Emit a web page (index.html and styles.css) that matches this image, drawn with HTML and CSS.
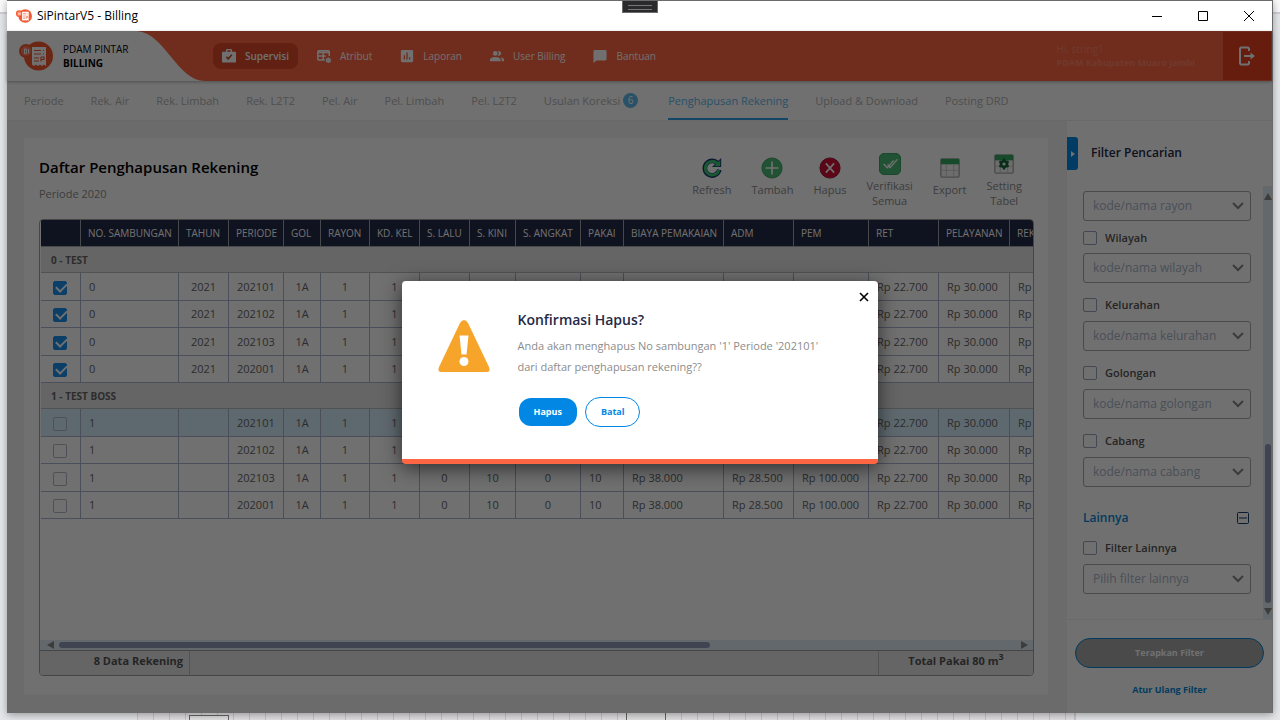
FILE: index.html
```html
<!DOCTYPE html>
<html lang="id">
<head>
<meta charset="utf-8">
<title>SiPintarV5 - Billing</title>
<link rel="stylesheet" href="styles.css">
</head>
<body>
<svg class="defs" width="0" height="0" aria-hidden="true">
  <symbol id="logo" viewBox="0 0 34 30">
    <circle cx="19.500" cy="15" r="14.500" fill="#f4592f"/><circle cx="7" cy="10" r="7" fill="#f4592f"/>
    <circle cx="7" cy="10" r="5" fill="#ff7d5a"/>
    <path d="M5.500 8v4.500h1.800V8zM9.500 8v4.500" stroke="#fff" fill="none"/>
    <path d="M13 6h14v19l-2-1.500-2 1.500-2-1.500-2 1.500-2-1.500-2 1.500-2-1.500z" fill="#fff"/>
    <path d="M15 9.500h7M24 9.500h1M15 13h7M24 13h1M15 17h5M15 20h5M22 16v4.500M22 16h3v2.500h-3" stroke="#f4592f" stroke-width="1.200" fill="none"/>
  </symbol>
</svg>
<div class="backdrop-grid" aria-hidden="true"><i class="node node-a"></i><i class="node node-b"></i></div>
<div class="window">
  <div class="handle"></div>
  <header class="titlebar">
    <svg class="app-icon"><use href="#logo"/></svg>
    <span class="app-name">SiPintarV5 - Billing</span>
    <div class="win-buttons">
      <button aria-label="Minimize"><svg width="12" height="12"><path d="M1 6.500h10" stroke="#000"/></svg></button>
      <button aria-label="Maximize"><svg width="12" height="12"><path d="M1.500 1.500h9v9h-9z" stroke="#000" fill="none"/></svg></button>
      <button aria-label="Close"><svg width="12" height="12"><path d="M1 1l10 10M11 1L1 11" stroke="#000"/></svg></button>
    </div>
  </header>

  <div class="content">
    <div class="header">
      <div class="brand">
        <svg class="brand-logo"><use href="#logo"/></svg>
        <div class="brand-text"><span>PDAM PINTAR</span><b>BILLING</b></div>
      </div>
      <svg class="curve" viewBox="0 0 68 50" preserveAspectRatio="none"><path d="M0 0C28 2 40 50 68 50H0z" fill="#fff"/></svg>
      <nav class="nav">
        <button class="nav-item active"><svg viewBox="0 0 16 16"><path fill="#fff" fill-rule="evenodd" d="M4.500 3V1.500A1.500 1.500 0 0 1 6 0h4a1.500 1.500 0 0 1 1.500 1.500V3H15a1 1 0 0 1 1 1v10.500a1 1 0 0 1-1 1H1a1 1 0 0 1-1-1V4a1 1 0 0 1 1-1zm1.600 0h3.800V1.500H6.100z"/><path d="M5 9l2.200 2.200 4-4.500" stroke="#c8401f" stroke-width="1.700" fill="none"/></svg>Supervisi</button>
        <button class="nav-item"><svg viewBox="0 0 16 16"><path d="M9 12.500H2a1 1 0 0 1-1-1V3a1 1 0 0 1 1-1h11a1 1 0 0 1 1 1v5M1 4h13M1 8h9M7 4v8" stroke="#fff" stroke-width="1.700" fill="none"/><circle cx="13" cy="13" r="2" stroke="#fff" stroke-width="1.700" fill="none"/><path d="M13 9.500v7M10 11.200l6 3.600M16 11.200l-6 3.600" stroke="#fff" stroke-width=".8"/></svg>Atribut</button>
        <button class="nav-item"><svg viewBox="0 0 16 16"><rect x="1" y="1" width="14" height="14" rx="1.500" fill="#fff"/><path d="M5 7v5M8 4v8M11 9.500V12" stroke="#ff6643" stroke-width="1.600"/></svg>Laporan</button>
        <button class="nav-item"><svg viewBox="0 0 16 16"><circle cx="6" cy="5" r="2.700" fill="#fff"/><path d="M0 14v-2c0-2 3.500-3 6-3s6 1 6 3v2zM9 2.500a2.700 2.700 0 1 1 0 5c1.300-1.500 1.300-3.500 0-5zM12 9.300c2 .3 4 1.200 4 2.700v2h-2.700v-2c0-1.200-.4-2-1.300-2.700z" fill="#fff"/></svg>User Billing</button>
        <button class="nav-item"><svg viewBox="0 0 16 16"><path d="M2 1h12a1.500 1.500 0 0 1 1.500 1.500v9A1.500 1.500 0 0 1 14 13H4l-3.500 3V2.500A1.500 1.500 0 0 1 2 1z" fill="#fff"/></svg>Bantuan</button>
      </nav>
      <div class="user"><span>Hi, string1</span><b>PDAM Kabupaten Muaro Jambi</b></div>
      <button class="logout" aria-label="Keluar"><svg width="18" height="20" viewBox="0 0 18 20"><path d="M11 5V2.500L10 1.500H3L2 2.500v15l1 1h7l1-1V15M6 10h9" stroke="#fff" stroke-width="2" fill="none"/><path d="M12.500 6.500L17 10l-4.500 3.500z" fill="#fff"/></svg></button>
    </div>

    <nav class="tabs">
      <a href="#">Periode</a><a href="#">Rek. Air</a><a href="#">Rek. Limbah</a><a href="#">Rek. L2T2</a><a href="#">Pel. Air</a><a href="#">Pel. Limbah</a><a href="#">Pel. L2T2</a><a href="#" class="with-badge">Usulan Koreksi<span class="badge">6</span></a><a href="#" class="current">Penghapusan Rekening</a><a href="#">Upload &amp; Download</a><a href="#">Posting DRD</a>
    </nav>

    <div class="body">
      <main class="main">
        <section class="card">
          <div class="card-head">
            <div class="heading"><h1>Daftar Penghapusan Rekening</h1><p>Periode 2020</p></div>
            <div class="toolbar">
              <button><svg viewBox="0 0 24 24"><path d="M19.500 9A8 8 0 1 0 20 14" stroke="#1b3c70" stroke-width="5" fill="none"/><path d="M22 1v10H12z" fill="#1b3c70"/><path d="M19 9A7.500 7.500 0 1 0 19.500 14" stroke="#3fc878" stroke-width="3" fill="none"/><path d="M21 3.500v6.500H14z" fill="#3fc878"/></svg>Refresh</button>
              <button><svg viewBox="0 0 24 24"><circle cx="12" cy="12" r="11" fill="#4cbb78" stroke="#3a9e62"/><path d="M12 5v14M5 12h14" stroke="#fff" stroke-width="1.800"/></svg>Tambah</button>
              <button><svg viewBox="0 0 24 24"><circle cx="12" cy="12" r="11" fill="#d01038" stroke="#9c1030"/><path d="M7.500 7l9 10M16.500 7l-9 10" stroke="#fff" stroke-width="1.800"/></svg>Hapus</button>
              <button class="tall"><svg viewBox="0 0 24 24"><rect x=".5" y=".5" width="23" height="23" rx="5" fill="#4cbb78" stroke="#2c9a5c"/><path d="M5 12l4 4 7-8M9.500 12.500L12 16l8-9" stroke="#fff" stroke-width="1.500" fill="none"/></svg>Verifikasi<br>Semua</button>
              <button><svg viewBox="0 0 24 24"><rect x="2" y="2" width="20" height="20" rx="1.500" fill="#f8f8f8" stroke="#aaa" stroke-width="1.500"/><path d="M2 2h20v6H2z" fill="#35a863"/><path d="M2 14.500h20M8 8v14M16 8v14" stroke="#ccc"/></svg>Export</button>
              <button class="tall"><svg viewBox="0 0 24 24"><rect x="2" y="2" width="20" height="20" rx="1.500" fill="#f8f8f8" stroke="#aaa" stroke-width="1.500"/><path d="M2 2h20v6H2z" fill="#35a863"/><path d="M2 14.500h20M8 8v14M16 8v14" stroke="#ccc"/><circle cx="12" cy="12" r="3.200" fill="none" stroke="#17693d" stroke-width="3"/><path d="M12 6v3M12 15v3M7 9l2 1.500M15 13.500l2 1.500M7 15l2-1.500M15 10.500L17 9" stroke="#17693d" stroke-width="2.500"/></svg>Setting<br>Tabel</button>
            </div>
          </div>

          <div class="grid-box">
            <div class="grid-scroll">
              <table>
                <colgroup><col class="w-check"><col class="w-no"><col class="w-thn"><col class="w-per"><col class="w-gol"><col class="w-ray"><col class="w-thn"><col class="w-thn"><col class="w-kini"><col class="w-ang"><col class="w-pakai"><col class="w-biaya"><col class="w-rp"><col class="w-pem"><col class="w-rp"><col class="w-pel"><col class="w-biaya"></colgroup>
                <thead><tr><th></th><th>NO. SAMBUNGAN</th><th>TAHUN</th><th>PERIODE</th><th>GOL</th><th>RAYON</th><th>KD. KEL</th><th>S. LALU</th><th>S. KINI</th><th>S. ANGKAT</th><th>PAKAI</th><th>BIAYA PEMAKAIAN</th><th>ADM</th><th>PEM</th><th>RET</th><th>PELAYANAN</th><th>REK. AIR</th></tr></thead>
                <tbody>
                  <tr class="group"><td colspan="17">0 - TEST</td></tr>
                  <tr><td><input type="checkbox" aria-label="Pilih 202101" checked></td><td>0</td><td>2021</td><td>202101</td><td>1A</td><td>1</td><td>1</td><td>0</td><td>10</td><td>0</td><td>10</td><td>Rp 38.000</td><td>Rp 28.500</td><td>Rp 100.000</td><td>Rp 22.700</td><td>Rp 30.000</td><td>Rp 219.200</td></tr>
                  <tr><td><input type="checkbox" aria-label="Pilih 202102" checked></td><td>0</td><td>2021</td><td>202102</td><td>1A</td><td>1</td><td>1</td><td>0</td><td>10</td><td>0</td><td>10</td><td>Rp 38.000</td><td>Rp 28.500</td><td>Rp 100.000</td><td>Rp 22.700</td><td>Rp 30.000</td><td>Rp 219.200</td></tr>
                  <tr><td><input type="checkbox" aria-label="Pilih 202103" checked></td><td>0</td><td>2021</td><td>202103</td><td>1A</td><td>1</td><td>1</td><td>0</td><td>10</td><td>0</td><td>10</td><td>Rp 38.000</td><td>Rp 28.500</td><td>Rp 100.000</td><td>Rp 22.700</td><td>Rp 30.000</td><td>Rp 219.200</td></tr>
                  <tr><td><input type="checkbox" aria-label="Pilih 202001" checked></td><td>0</td><td>2021</td><td>202001</td><td>1A</td><td>1</td><td>1</td><td>0</td><td>10</td><td>0</td><td>10</td><td>Rp 38.000</td><td>Rp 28.500</td><td>Rp 100.000</td><td>Rp 22.700</td><td>Rp 30.000</td><td>Rp 219.200</td></tr>
                </tbody>
                <tbody>
                  <tr class="group"><td colspan="17">1 - TEST BOSS</td></tr>
                  <tr class="selected"><td><input type="checkbox" aria-label="Pilih 202101"></td><td>1</td><td></td><td>202101</td><td>1A</td><td>1</td><td>1</td><td>0</td><td>10</td><td>0</td><td>10</td><td>Rp 38.000</td><td>Rp 28.500</td><td>Rp 100.000</td><td>Rp 22.700</td><td>Rp 30.000</td><td>Rp 219.200</td></tr>
                  <tr><td><input type="checkbox" aria-label="Pilih 202102"></td><td>1</td><td></td><td>202102</td><td>1A</td><td>1</td><td>1</td><td>0</td><td>10</td><td>0</td><td>10</td><td>Rp 38.000</td><td>Rp 28.500</td><td>Rp 100.000</td><td>Rp 22.700</td><td>Rp 30.000</td><td>Rp 219.200</td></tr>
                  <tr><td><input type="checkbox" aria-label="Pilih 202103"></td><td>1</td><td></td><td>202103</td><td>1A</td><td>1</td><td>1</td><td>0</td><td>10</td><td>0</td><td>10</td><td>Rp 38.000</td><td>Rp 28.500</td><td>Rp 100.000</td><td>Rp 22.700</td><td>Rp 30.000</td><td>Rp 219.200</td></tr>
                  <tr><td><input type="checkbox" aria-label="Pilih 202001"></td><td>1</td><td></td><td>202001</td><td>1A</td><td>1</td><td>1</td><td>0</td><td>10</td><td>0</td><td>10</td><td>Rp 38.000</td><td>Rp 28.500</td><td>Rp 100.000</td><td>Rp 22.700</td><td>Rp 30.000</td><td>Rp 219.200</td></tr>
                </tbody>
              </table>
            </div>
            <div class="hscroll"><i class="arrow left"></i><span class="track"><i class="thumb"></i></span><i class="arrow right"></i></div>
            <div class="summary"><b class="count">8 Data Rekening</b><b class="total">Total Pakai 80 m<sup>3</sup></b></div>
          </div>
        </section>
      </main>

      <aside class="filter">
        <div class="filter-head"><button class="collapse" aria-label="Tutup filter"><i></i></button><h2>Filter Pencarian</h2></div>
        <div class="filter-scroll">
          <div class="fields">
            <select aria-label="Rayon"><option>kode/nama rayon</option></select>
            <label class="check first"><input type="checkbox">Wilayah</label>
            <select aria-label="Wilayah"><option>kode/nama wilayah</option></select>
            <label class="check"><input type="checkbox">Kelurahan</label>
            <select aria-label="Kelurahan"><option>kode/nama kelurahan</option></select>
            <label class="check"><input type="checkbox">Golongan</label>
            <select aria-label="Golongan"><option>kode/nama golongan</option></select>
            <label class="check"><input type="checkbox">Cabang</label>
            <select aria-label="Cabang"><option>kode/nama cabang</option></select>
            <div class="section"><span>Lainnya</span><button aria-label="Ciutkan"><svg width="12" height="12"><rect x=".5" y=".5" width="11" height="11" rx="1" fill="none" stroke="#173a6b"/><path d="M2 6h8" stroke="#173a6b"/></svg></button></div>
            <label class="check"><input type="checkbox">Filter Lainnya</label>
            <select aria-label="Filter Lainnya"><option>Pilih filter lainnya</option></select>
          </div>
          <div class="vscroll"><i class="arrow up"></i><span class="track"><i class="thumb"></i></span><i class="arrow down"></i></div>
        </div>
        <div class="filter-foot"><button class="apply">Terapkan Filter</button><a href="#">Atur Ulang Filter</a></div>
      </aside>
    </div>

    <div class="overlay">
      <div class="dialog" role="dialog" aria-labelledby="dlg-title">
        <button class="close" aria-label="Tutup"><svg width="10" height="10"><path d="M1 1l8 8M9 1L1 9" stroke="#000" stroke-width="1.600"/></svg></button>
        <svg class="warn" viewBox="0 0 52 52"><path d="M22 3q4-6 8 0l21 44q2 5-3 5H4q-5 0-3-5z" fill="#f7a52a"/><path d="M21.500 15.500h9l-2 19h-5z" fill="#fff"/><circle cx="26" cy="41.500" r="4.500" fill="#fff"/></svg>
        <div class="dialog-body">
          <h2 id="dlg-title">Konfirmasi Hapus?</h2>
          <p>Anda akan menghapus No sambungan '1' Periode '202101' dari daftar penghapusan rekening??</p>
          <div class="actions"><button class="primary">Hapus</button><button class="secondary">Batal</button></div>
        </div>
      </div>
    </div>
  </div>
</div>
</body>
</html>
```

FILE: styles.css
```css
* { box-sizing: border-box; }
body {
  margin: 0; height: 100vh; padding: 0 7px 7px; overflow: hidden; position: relative;
  background: linear-gradient(#fafafa 12px, #cfd0d4 12px, #cfd0d4 14px, #e6e7ea 14px);
  font-family: "Open Sans", "Noto Sans", sans-serif; font-size: 12px; line-height: 16px; color: #000;
}
button { font: inherit; color: inherit; background: none; border: 0; padding: 0; margin: 0; }
a { color: inherit; text-decoration: none; }
h1, h2, p { margin: 0; }
.defs { position: absolute; }

.backdrop-grid {
  position: absolute; left: 137px; right: 204px; bottom: 0; height: 8px;
  border-right: 2px solid #c8c8c8; border-left: 1px solid #c8c8c8;
  background: repeating-linear-gradient(90deg, #e4e2e4 0 15px, #c8c6c8 15px 16px);
}
.node { position: absolute; bottom: 0; width: 40px; height: 5px; background: #e2e2e2; border: 1px solid #666; border-bottom: 0; }
.node-a { left: 51px; }
.node-b { left: 488px; height: 8px; border-top: 0; }

.window {
  position: relative; height: 100%; display: flex; flex-direction: column;
  border-top: 1px solid #6b6b6b; border-right: 1px solid #6b6b6b;
  box-shadow: 0 2px 8px rgba(0,0,0,.35); background: #fff;
}
.handle {
  position: absolute; top: 0; left: 50%; width: 36px; height: 12px; margin-left: -18px;
  background: #2a2a2c; border: 1px solid #6b6b6b; border-top: 0;
}
.handle::after { content: ""; position: absolute; left: 5px; right: 5px; top: 4px; height: 3px; border: solid #777; border-width: 1px 0; }
.titlebar { height: 30px; flex: none; display: flex; align-items: center; padding-left: 9px; gap: 5px; }
.app-icon { width: 16px; height: 16px; }
.win-buttons { margin-left: auto; display: flex; }
.win-buttons button { width: 46px; height: 30px; display: grid; place-items: center; }

.content { position: relative; flex: 1; min-height: 0; display: flex; flex-direction: column; }
.header { height: 50px; flex: none; display: flex; align-items: center; background: #ff6643; color: #fff; box-shadow: 0 1px 3px rgba(0,0,0,.3); z-index: 1; }
.brand { width: 130px; height: 50px; flex: none; background: #fff; color: #000; display: flex; align-items: center; gap: 10px; padding-left: 12px; }
.brand-logo { width: 34px; height: 30px; flex: none; }
.brand-text, .user { display: flex; flex-direction: column; font-size: 10px; line-height: 14px; white-space: nowrap; }
.curve { width: 68px; height: 50px; flex: none; }
.nav { display: flex; gap: 10px; padding-left: 8px; }
.nav-item { height: 26px; padding: 0 9px; display: flex; align-items: center; gap: 9px; border-radius: 8px; font-size: 10px; white-space: nowrap; }
.nav-item svg { width: 14px; height: 14px; }
.nav-item.active { background: #dc4a28; font-weight: 600; }
.user { margin-left: auto; padding-right: 28px; color: #ff8468; }
.user b { font-size: 9px; }
.logout { width: 48px; height: 48px; background: #e84220; display: grid; place-items: center; margin-right: 1px; }

.tabs { height: 40px; flex: none; display: flex; gap: 27px; padding: 0 17px; border-bottom: 1px solid #eee; color: #b4b4b4; font-size: 11px; }
.tabs a { height: 39px; line-height: 39px; white-space: nowrap; }
.tabs .current { color: #5fb8ea; border-bottom: 2px solid #2ba0e4; }
.with-badge { display: flex; align-items: center; gap: 3px; }
.badge { width: 15px; height: 15px; border-radius: 8px; background: #5fb8ea; color: #fff; font-size: 10px; line-height: 15px; text-align: center; margin-right: 3px; }

.body { flex: 1; min-height: 0; display: flex; }
.main { flex: 1; min-width: 0; background: #f4f4f4; padding: 17px 19px 18px 17px; }
.card { height: 100%; background: #fff; padding: 12px 14px 19px 15px; display: flex; flex-direction: column; }
.card-head { height: 69px; flex: none; display: flex; justify-content: space-between; }
h1 { font-size: 15px; line-height: 20px; font-weight: 600; }
.heading { padding-top: 7px; }
.heading p { margin-top: 9px; color: #8c8c8c; font-size: 11px; }
.toolbar { display: flex; align-items: flex-start; gap: 20px; padding: 2px 12px 0 0; }
.toolbar button { display: flex; flex-direction: column; align-items: center; gap: 2px; padding-top: 4px; color: #8c8c8c; font-size: 11px; line-height: 15px; }
.toolbar .tall { padding-top: 0; }
.toolbar svg { width: 24px; height: 24px; padding: 1px; }

.grid-box { flex: 1; min-height: 0; display: flex; flex-direction: column; border: 1px solid #a0a0a0; border-radius: 4px; overflow: hidden; }
.grid-scroll { flex: 1; min-height: 0; overflow: hidden; padding-left: 1px; }
table { table-layout: fixed; width: 1069px; border-spacing: 0; }
.w-check { width: 40px; } .w-no { width: 98px; } .w-thn { width: 50px; } .w-per { width: 55px; }
.w-gol { width: 37px; } .w-ray { width: 49px; } .w-kini { width: 46px; } .w-ang { width: 65px; }
.w-pakai { width: 43px; } .w-biaya { width: 100px; } .w-rp { width: 70px; } .w-pem { width: 75px; } .w-pel { width: 71px; }
th, td { padding: 0 0 0 8px; border-right: 1px solid #aab4d0; white-space: nowrap; text-align: left; }
th { height: 27px; padding-left: 7px; background: #242947; color: #fff; font-size: 10px; font-weight: 400; border-right-color: #a0a4ac; border-bottom: 1px solid #a0a4ac; }
td { height: 27px; border-bottom: 1px solid #aab4d0; color: #666; font-size: 11px; line-height: 16px; }
tbody tr:nth-child(even) td { height: 28px; }
tbody .group td { height: 26px; padding-left: 10px; background: #e7e7e7; border-bottom-color: #bbb; font-size: 10px; font-weight: 700; }
td:nth-child(3), td:nth-child(5), td:nth-child(6), td:nth-child(7), td:nth-child(8), td:nth-child(9), td:nth-child(10) { padding: 0; text-align: center; }
td:first-child:not([colspan]) { padding: 0 2px 0 0; text-align: center; }
.selected td { background: #d6eefc; }

input[type="checkbox"] { appearance: none; width: 14px; height: 14px; margin: 0; border: 1px solid #98a2c0; border-radius: 2px; position: relative; vertical-align: middle; flex: none; }
td input[type="checkbox"] { border-color: #b4b8c4; }
td input[type="checkbox"]:checked { background: #1c90ec; border-color: #1c90ec; }
td input[type="checkbox"]:checked::after { content: ""; position: absolute; left: 2px; top: 1px; width: 9px; height: 5px; border: solid #fff; border-width: 0 0 2px 2px; transform: rotate(-45deg); }

.hscroll { height: 10px; flex: none; display: flex; align-items: center; background: #dfecf5; padding: 0 5px 0 7px; gap: 5px; }
.track { flex: 1; display: flex; }
.thumb { background: #929cb6; border-radius: 3px; }
.hscroll .thumb { width: 68%; height: 6px; }
.arrow { border: 4px solid transparent; width: 0; height: 0; }
.arrow.left { border-right: 7px solid #888; border-left: 0; }
.arrow.right { border-left: 7px solid #888; border-right: 0; }
.summary { height: 25px; flex: none; display: flex; justify-content: space-between; background: #e7e7e7; border-top: 1px solid #a0a0a0; color: #555; font-size: 11px; line-height: 20px; }
.count { width: 150px; padding-right: 6px; text-align: right; border-right: 1px solid #bbb; }
.total { width: 155px; text-align: center; border-left: 1px solid #bbb; }
sup { font-size: 9px; line-height: 0; }

.filter { width: 205px; flex: none; background: #fff; display: flex; flex-direction: column; }
.filter-head { height: 65px; flex: none; display: flex; padding-top: 16px; gap: 13px; }
.collapse { width: 11px; height: 33px; background: #0288e4; border-radius: 0 3px 3px 0; display: grid; place-items: center; }
.collapse i { border: 3px solid transparent; border-left: 4px solid #fff; border-right: 0; }
h2 { font-size: 12px; line-height: 32px; font-weight: 600; color: #242947; }
.filter-scroll { flex: 1; min-height: 0; display: flex; border-bottom: 1px solid #eee; }
.fields { flex: 1; padding: 5px 12px 0 16px; display: flex; flex-direction: column; }
select { appearance: none; height: 30px; flex: none; width: 100%; padding: 0 9px; border: 1px solid #a8a8a8; border-radius: 3px; color: #aab4c8; font: inherit; font-size: 12px;
  background: url("data:image/svg+xml,%3Csvg xmlns='http://www.w3.org/2000/svg' width='12' height='8'%3E%3Cpath d='M1 1l5 5 5-5' fill='none' stroke='%23888' stroke-width='2'/%3E%3C/svg%3E") no-repeat right 6px center #fff; }
.check { display: flex; align-items: center; gap: 8px; margin: 14px 0 8px; height: 16px; flex: none; font-size: 11px; font-weight: 600; color: #555; }
.check.first { margin: 9px 0 7px; }
.section { display: flex; justify-content: space-between; align-items: center; height: 16px; margin-top: 23px; padding-right: 2px; color: #0288d8; font-weight: 600; }
.section button { display: flex; }
.vscroll { width: 9px; display: flex; flex-direction: column; align-items: center; padding: 7px 0 4px; gap: 5px; background: #dfecf5; }
.vscroll .track { flex-direction: column; justify-content: flex-end; }
.vscroll .thumb { width: 6px; height: 40%; }
.arrow.up { border-bottom: 7px solid #888; border-top: 0; }
.arrow.down { border-top: 7px solid #888; border-bottom: 0; }
.filter-foot { height: 93px; flex: none; padding: 18px 8px 0; display: flex; flex-direction: column; align-items: center; gap: 14px; color: #0288d8; font-size: 9px; font-weight: 700; }
.apply { width: 100%; height: 30px; border: 1px solid #0288d8; border-radius: 15px; background: #a8a8a8; color: #fff; }

.overlay { position: absolute; inset: 0; z-index: 2; background: rgba(0,0,0,.56); display: grid; place-items: center; }
.dialog { position: relative; width: 476px; min-height: 183px; display: flex; gap: 28px; padding: 28px 44px 32px 36px; background: #fff; border-bottom: 5px solid #ff6643; border-radius: 4px; box-shadow: 0 4px 20px rgba(0,0,0,.6); }
.close { position: absolute; top: 11px; right: 9px; display: flex; }
.warn { width: 52px; height: 52px; margin-top: 11px; flex: none; }
.dialog h2 { font-size: 14px; line-height: 22px; }
.dialog p { margin-top: 4px; font-size: 11px; line-height: 21px; color: #8c8c8c; }
.actions { display: flex; align-items: center; gap: 8px; margin-top: 20px; font-size: 9px; font-weight: 700; }
.primary { height: 28px; padding: 0 15px; margin-left: 1px; border-radius: 12px; background: #0288e4; color: #fff; }
.secondary { height: 30px; padding: 0 15px; border: 1px solid #0288e4; border-radius: 15px; color: #0288e4; }
```
